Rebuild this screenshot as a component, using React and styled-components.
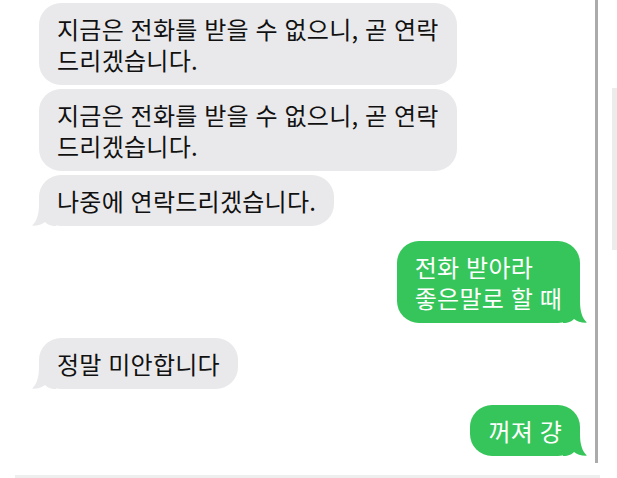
import React from 'react';
import styled, { createGlobalStyle } from 'styled-components';

const GlobalStyle = createGlobalStyle`
  body {
    margin: 0;
    background: #fff;
    font-family: "Noto Sans CJK KR", "Noto Sans", sans-serif;
  }
`

const Screen = styled.div`
  display: grid;
  grid-template-columns: 598px 1fr;
  width: 617px;
  height: 478px;
  overflow: hidden;
`

const Thread = styled.div`
  box-sizing: border-box;
  height: 463px;
  padding: 3px 15px 0 39px;
  border-right: 3px solid #ababab;
  display: flex;
  flex-direction: column;
`

const Group = styled.div`
  display: flex;
  flex-direction: column;
  align-items: ${p => (p.$out ? 'flex-end' : 'flex-start')};
  gap: 4px;
  margin-top: ${p => p.$space || 0}px;
`

const Bubble = styled.div`
  position: relative;
  padding: 10px 18px;
  border-radius: 22px;
  background: ${p => (p.$out ? '#36c55a' : '#e9e9eb')};
  color: ${p => (p.$out ? '#fff' : '#111')};
  font-size: 24px;
  line-height: 31px;
  letter-spacing: 0.25px;
  word-spacing: 1px;
  white-space: nowrap;
`

const TailSvg = styled.svg`
  position: absolute;
  bottom: 0;
  ${p => (p.$out ? 'right: -7px; transform: scaleX(-1);' : 'left: -7px;')}
`

const Side = styled.div`
  padding: 88px 0 0 14px;
`

const ScrollThumb = styled.div`
  width: 5px;
  height: 162px;
  background: #ececec;
`

const BottomRule = styled.div`
  grid-column: 1 / -1;
  margin: 11px 0 0 15px;
  width: 585px;
  height: 3px;
  background: #eeeeee;
`

const Tail = ({ out }) => (
  <TailSvg $out={out} width="24" height="22" viewBox="0 0 24 22">
    <path
      fill={out ? '#36c55a' : '#e9e9eb'}
      d="M7 0 C7 10 5 17 0 21.6 C5 22 10 20.5 13 18 C15 20 18 22 24 22 L24 0 Z"
    />
  </TailSvg>
);

const Message = ({ out, tail, children }) => (
  <Bubble $out={out}>
    {children}
    {tail && <Tail out={out} />}
  </Bubble>
);

export default function App() {
  return (
    <>
      <GlobalStyle />
      <Screen>
        <Thread>
          <Group>
            <Message>
              지금은 전화를 받을 수 없으니, 곧 연락<br />드리겠습니다.
            </Message>
            <Message>
              지금은 전화를 받을 수 없으니, 곧 연락<br />드리겠습니다.
            </Message>
            <Message tail>나중에 연락드리겠습니다.</Message>
          </Group>
          <Group $out $space={15}>
            <Message out tail>
              전화 받아라<br />좋은말로 할 때
            </Message>
          </Group>
          <Group $space={15}>
            <Message tail>정말 미안합니다</Message>
          </Group>
          <Group $out $space={16}>
            <Message out tail>꺼져 걍</Message>
          </Group>
        </Thread>
        <Side>
          <ScrollThumb />
        </Side>
        <BottomRule />
      </Screen>
    </>
  );
}
